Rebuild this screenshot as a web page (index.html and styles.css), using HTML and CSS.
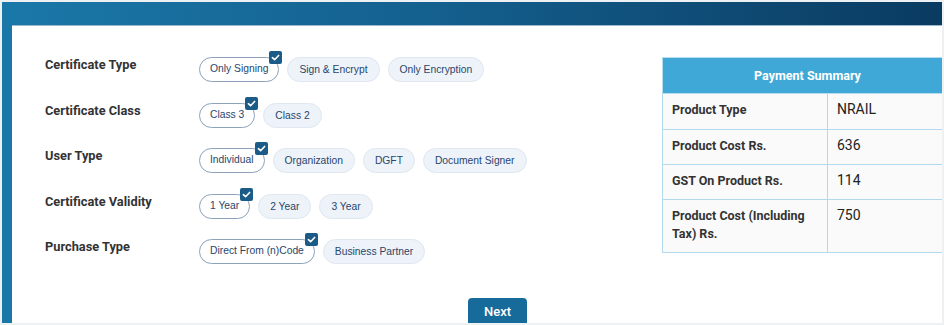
FILE: index.html
```html
<!DOCTYPE html>
<html lang="en">
<head>
<meta charset="utf-8">
<title>Certificate Purchase</title>
<link rel="stylesheet" href="styles.css">
</head>
<body>
<div class="frame">
  <div class="app">
    <div class="panel">
      <div class="main">
        <div class="form">
          <div class="row">
            <div class="label">Certificate Type</div>
            <div class="chips">
              <span class="chip selected">Only Signing<span class="tick"><svg viewBox="0 0 12 12"><path d="M2.6 6.2 L5 8.4 L9.4 3.8" /></svg></span></span>
              <span class="chip">Sign &amp; Encrypt</span>
              <span class="chip">Only Encryption</span>
            </div>
          </div>
          <div class="row">
            <div class="label">Certificate Class</div>
            <div class="chips">
              <span class="chip selected">Class 3<span class="tick"><svg viewBox="0 0 12 12"><path d="M2.6 6.2 L5 8.4 L9.4 3.8" /></svg></span></span>
              <span class="chip">Class 2</span>
            </div>
          </div>
          <div class="row">
            <div class="label">User Type</div>
            <div class="chips">
              <span class="chip selected">Individual<span class="tick"><svg viewBox="0 0 12 12"><path d="M2.6 6.2 L5 8.4 L9.4 3.8" /></svg></span></span>
              <span class="chip">Organization</span>
              <span class="chip">DGFT</span>
              <span class="chip">Document Signer</span>
            </div>
          </div>
          <div class="row">
            <div class="label">Certificate Validity</div>
            <div class="chips">
              <span class="chip selected">1 Year<span class="tick"><svg viewBox="0 0 12 12"><path d="M2.6 6.2 L5 8.4 L9.4 3.8" /></svg></span></span>
              <span class="chip">2 Year</span>
              <span class="chip">3 Year</span>
            </div>
          </div>
          <div class="row">
            <div class="label">Purchase Type</div>
            <div class="chips">
              <span class="chip selected">Direct From (n)Code<span class="tick"><svg viewBox="0 0 12 12"><path d="M2.6 6.2 L5 8.4 L9.4 3.8" /></svg></span></span>
              <span class="chip">Business Partner</span>
            </div>
          </div>
        </div>
        <div class="summary">
          <table class="pay">
            <colgroup>
              <col class="ck">
              <col class="cv">
            </colgroup>
            <thead>
              <tr><th colspan="2">Payment Summary</th></tr>
            </thead>
            <tbody>
              <tr><td class="k">Product Type</td><td class="v">NRAIL</td></tr>
              <tr><td class="k">Product Cost Rs.</td><td class="v">636</td></tr>
              <tr><td class="k">GST On Product Rs.</td><td class="v">114</td></tr>
              <tr class="tall"><td class="k">Product Cost (Including Tax) Rs.</td><td class="v">750</td></tr>
            </tbody>
          </table>
        </div>
      </div>
      <div class="actions">
        <button class="next" type="button">Next</button>
      </div>
    </div>
  </div>
</div>
</body>
</html>
```
FILE: styles.css
```css
html, body {
  margin: 0;
  padding: 0;
  background: #ffffff;
}

.frame {
  width: 944px;
  height: 325px;
  box-sizing: border-box;
  padding: 2px;
  background: #eef1f4;
  overflow: hidden;
}

.app {
  height: 321px;
  box-sizing: border-box;
  padding: 23px 0 0 10px;
  background: linear-gradient(90deg, #1a78a8 0%, #14608f 45%, #0a3b61 100%);
  display: flex;
}

.panel {
  flex: 1;
  background: #ffffff;
  border-top: 1px solid #9db8cc;
  padding: 31px 0 0 33px;
  overflow: hidden;
  display: flex;
  flex-direction: column;
  font-family: Roboto, "Liberation Sans", Arial, sans-serif;
}

.main {
  display: flex;
  align-items: flex-start;
}

.form {
  width: 617px;
  flex-shrink: 0;
  display: flex;
  flex-direction: column;
  gap: 20.5px;
}

.row {
  display: flex;
  align-items: flex-start;
  height: 25px;
}

.label {
  width: 154px;
  flex-shrink: 0;
  font-size: 12.8px;
  line-height: 16px;
  font-weight: 700;
  color: #333333;
}

.chips {
  display: flex;
  gap: 8px;
}

.chip {
  position: relative;
  height: 25px;
  box-sizing: border-box;
  padding: 0 11px;
  border: 1px solid #dfe7f1;
  border-radius: 13px;
  background: #eef3fa;
  font-family: "Liberation Sans", Arial, sans-serif;
  font-size: 10.3px;
  line-height: 23px;
  color: #28466a;
  white-space: nowrap;
}

.chip.selected {
  background: #ffffff;
  border: 1.5px solid #8ca2bb;
  padding: 0 10px;
  line-height: 22px;
}

.tick {
  position: absolute;
  top: -7px;
  right: -4px;
  width: 13px;
  height: 13px;
  border-radius: 2px;
  background: #1b5b87;
  display: flex;
  align-items: center;
  justify-content: center;
}

.tick svg {
  width: 11px;
  height: 11px;
  fill: none;
  stroke: #ffffff;
  stroke-width: 1.8;
  stroke-linecap: round;
  stroke-linejoin: round;
}

.summary {
  width: 300px;
  flex-shrink: 0;
}

.pay {
  width: 290px;
  border-collapse: collapse;
  table-layout: fixed;
}

.pay col.ck {
  width: 165px;
}

.pay col.cv {
  width: 125px;
}

.pay th {
  height: 36px;
  box-sizing: border-box;
  background: #3fa8d6;
  color: #ffffff;
  font-size: 12.5px;
  font-weight: 700;
  text-align: center;
  border: 1px solid #b8dcef;
  padding: 0 0 1px 0;
}

.pay td {
  border: 1px solid #b3d9ee;
  background: #fafafa;
  padding: 8px 9px 8px 9px;
  line-height: 18px;
  vertical-align: top;
}

.pay tbody tr {
  height: 35px;
}

.pay tbody tr:first-child {
  height: 36px;
}

.pay tbody tr.tall {
  height: 53px;
}

.pay td.k {
  font-size: 12.5px;
  font-weight: 700;
  color: #333333;
  padding-top: 7px;
}

.pay td.v {
  font-size: 14px;
  color: #222222;
  padding-top: 6px;
}

.actions {
  margin-top: 34px;
  padding-left: 423px;
}

.next {
  width: 59px;
  height: 26px;
  border: none;
  border-radius: 4px 4px 0 0;
  background: #176b9b;
  color: #ffffff;
  font-family: Roboto, "Liberation Sans", Arial, sans-serif;
  font-size: 13px;
  font-weight: 500;
  padding: 0;
}
```
